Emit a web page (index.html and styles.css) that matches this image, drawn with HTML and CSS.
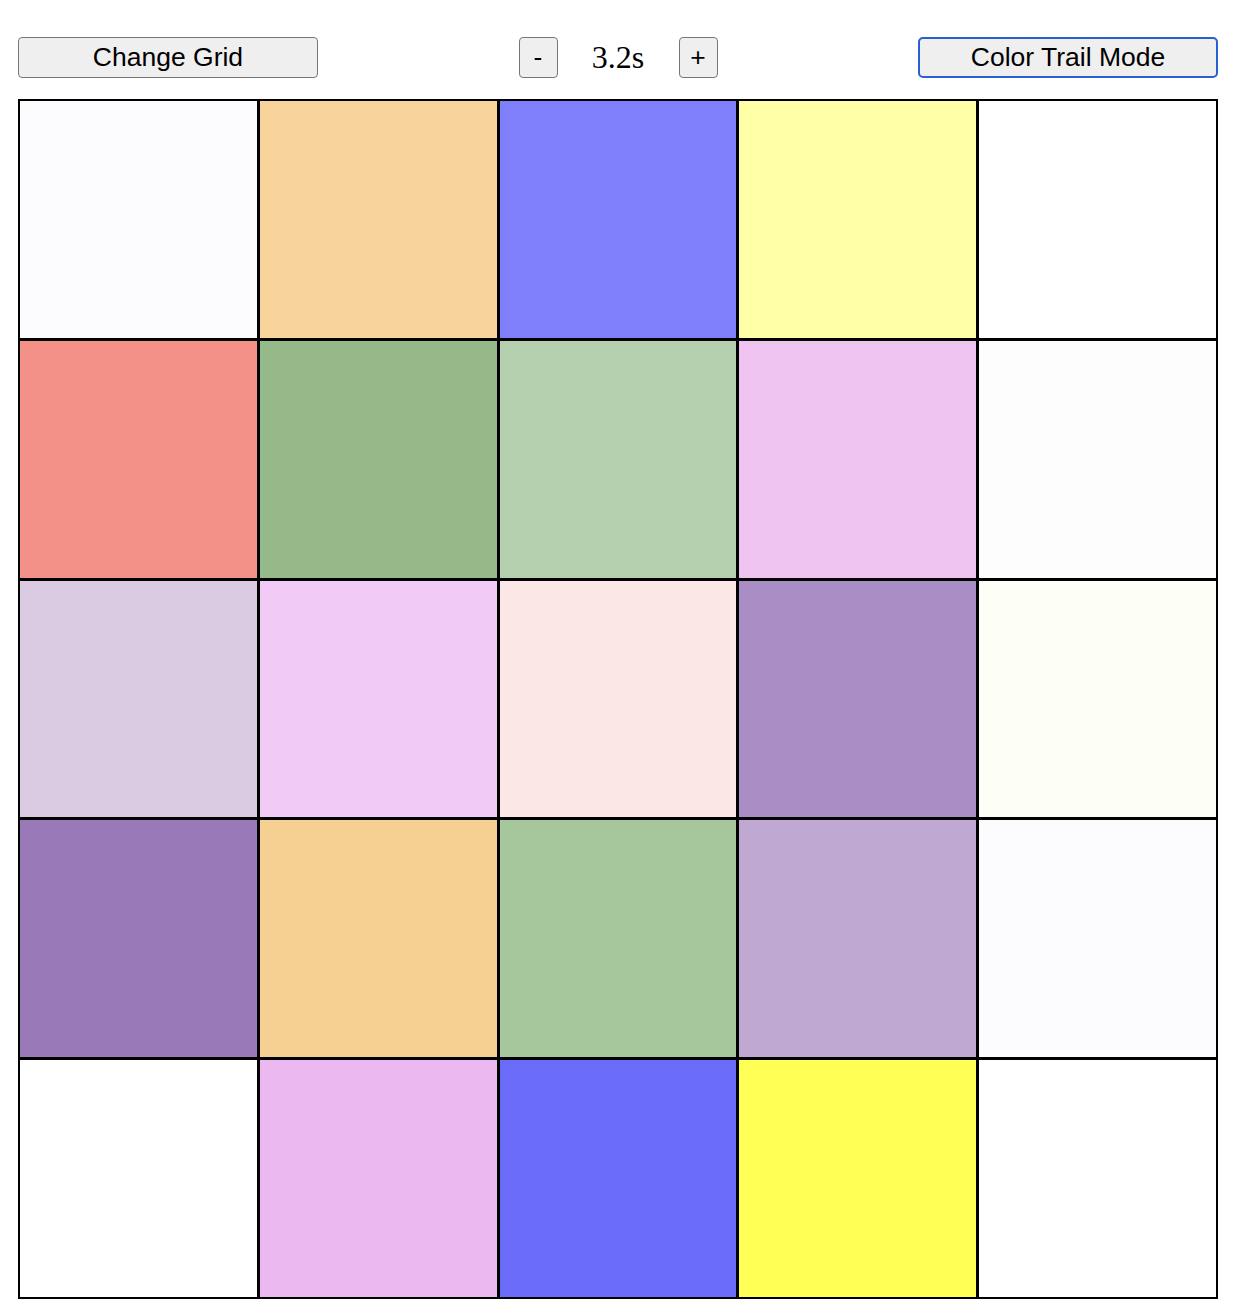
FILE: index.html
```html
<!DOCTYPE html>
<html>
<head>
<meta charset="utf-8">
<link rel="stylesheet" href="styles.css">
</head>
<body>
<div class="page">
  <div class="controls">
    <button class="btn wide">Change Grid</button>
    <div class="speed">
      <button class="btn small">-</button>
      <span class="speed-value">3.2s</span>
      <button class="btn small">+</button>
    </div>
    <button class="btn wide focused">Color Trail Mode</button>
  </div>
  <div class="grid">
    <div class="cell" style="background:#fcfcff"></div>
    <div class="cell" style="background:#f8d49c"></div>
    <div class="cell" style="background:#7f7ffb"></div>
    <div class="cell" style="background:#ffffa8"></div>
    <div class="cell" style="background:#ffffff"></div>

    <div class="cell" style="background:#f39088"></div>
    <div class="cell" style="background:#95b988"></div>
    <div class="cell" style="background:#b4cfae"></div>
    <div class="cell" style="background:#eec3f0"></div>
    <div class="cell" style="background:#fdfdfd"></div>

    <div class="cell" style="background:#dacbe3"></div>
    <div class="cell" style="background:#f1caf5"></div>
    <div class="cell" style="background:#fbe7e6"></div>
    <div class="cell" style="background:#a98dc4"></div>
    <div class="cell" style="background:#fdfff7"></div>

    <div class="cell" style="background:#9a79b8"></div>
    <div class="cell" style="background:#f6cf92"></div>
    <div class="cell" style="background:#a6c79b"></div>
    <div class="cell" style="background:#bfa8d1"></div>
    <div class="cell" style="background:#fcfbfe"></div>

    <div class="cell" style="background:#ffffff"></div>
    <div class="cell" style="background:#ecb8f0"></div>
    <div class="cell" style="background:#6a6bf8"></div>
    <div class="cell" style="background:#ffff55"></div>
    <div class="cell" style="background:#ffffff"></div>
  </div>
</div>
</body>
</html>
```
FILE: styles.css
```css
html, body {
  margin: 0;
  padding: 0;
  background: #ffffff;
}

.page {
  padding: 37px 16px 0 18px;
  width: 1200px;
}

.controls {
  display: flex;
  justify-content: space-between;
  align-items: center;
  height: 41px;
}

.btn {
  font-family: "Liberation Sans", Arial, sans-serif;
  font-size: 26.5px;
  color: #000;
  background: #efefef;
  border: 1px solid #767676;
  border-radius: 4px;
  height: 41px;
  padding: 0;
  margin: 0;
  box-sizing: border-box;
}

.btn.wide {
  width: 300px;
}

.btn.small {
  width: 39px;
}

.btn.focused {
  border: 2px solid #2a5fd0;
  border-radius: 5px;
}

.speed {
  display: flex;
  align-items: center;
}

.speed-value {
  width: 121px;
  text-align: center;
  font-family: "Liberation Serif", "Times New Roman", serif;
  font-size: 32px;
  color: #000;
}

.grid {
  margin-top: 21px;
  display: grid;
  grid-template-columns: repeat(5, 1fr);
  grid-template-rows: repeat(5, 1fr);
  gap: 3px;
  padding: 2px;
  background: #000;
  width: 1200px;
  height: 1200px;
  box-sizing: border-box;
}

.cell {
  background: #fff;
}
```
